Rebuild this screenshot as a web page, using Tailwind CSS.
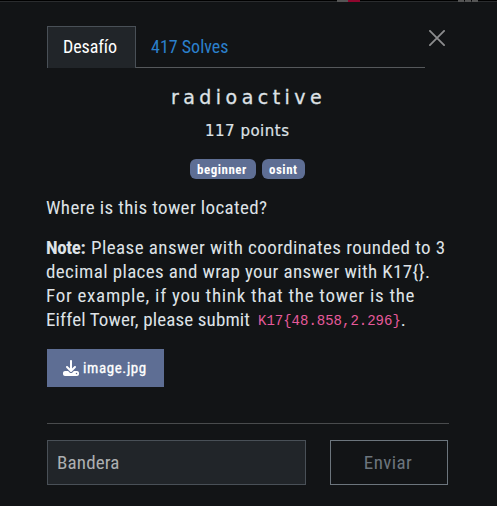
<!DOCTYPE html>
<html lang="es">
<head>
<meta charset="utf-8">
<title>radioactive</title>
<script src="https://cdn.jsdelivr.net/npm/@tailwindcss/browser@4"></script>
</head>
<body class="h-[506px] w-[497px] overflow-hidden bg-[#121416] font-['Roboto_Condensed','Roboto',sans-serif] text-[19px] text-[#dee2e6] whitespace-nowrap">
<div class="flex h-0.5 border-b border-[#2a2c2e] bg-black">
  <div class="ml-[337px] h-0.5 w-[11px] bg-[#555]"></div><div class="h-0.5 w-3 bg-[#90062e]"></div>
  <div class="ml-[98px] flex gap-px"><i class="h-0.5 w-1.5 bg-[#555]"></i><i class="h-0.5 w-1.5 bg-[#555]"></i><i class="h-0.5 w-1.5 bg-[#555]"></i></div>
</div>
<button class="absolute left-[429px] top-[30px] h-4 w-4" aria-label="Cerrar">
  <svg class="block" width="16" height="16" viewBox="0 0 16 16" fill="none" stroke="#8c8d8e" stroke-width="1.8" stroke-linecap="round"><path d="M.9.9l14.2 14.2M15.1.9L.9 15.1"/></svg>
</button>
<nav class="ml-[47px] mt-6 flex h-[42px] w-[378px] text-[18px]">
  <div class="w-[89px] border border-b-0 border-[#495057] bg-[#212529] pl-[15px] leading-[40px] tracking-[-0.08px] text-white">Desafío</div>
  <div class="flex-1 border-b border-[#55585b] pl-[15px] leading-[42px] tracking-[0px] text-[#2b80cc]">417 Solves</div>
</nav>
<main class="ml-[45px] w-[404px]">
  <h2 class="pl-[126px] pt-[15px] font-['DejaVu_Sans',sans-serif] text-[19px] leading-[28px] tracking-[4.45px] [-webkit-text-stroke:0.3px]">radioactive</h2>
  <h3 class="pl-[160px] pt-[6px] font-['DejaVu_Sans',sans-serif] text-[15px] leading-[28px] tracking-[0.5px] [-webkit-text-stroke:0.2px]">117 points</h3>
  <div class="mt-3.5 flex gap-1.5 pl-[145px] text-[13px] font-bold leading-[21px] tracking-[0.5px] text-white">
    <span class="h-5 w-[66px] rounded-[6px] bg-[#5e6e94] pl-[7px]">beginner</span>
    <span class="h-5 w-[43px] rounded-[6px] bg-[#5e6e94] pl-[7px]">osint</span>
  </div>
  <p class="mt-[17px] pl-px leading-6 tracking-[0.37px]">Where is this tower located?</p>
  <div class="mt-4 pl-px leading-6">
    <p class="flex"><b class="w-[45px] tracking-[-0.4px]">Note:</b><span class="tracking-[0.42px]">Please answer with coordinates rounded to 3</span></p>
    <p class="tracking-[0.38px]">decimal places and wrap your answer with K17{}.</p>
    <p class="tracking-[0.7px]">For example, if you think that the tower is the</p>
    <p class="flex h-6 tracking-[0.13px]"><span class="w-[212px]">Eiffel Tower, please submit</span><code class="font-['Liberation_Mono',monospace] text-[14px] leading-[27px] tracking-normal text-[#e65a9b]">K17{48.858,2.296}</code>.</p>
  </div>
  <a class="ml-0.5 mt-[17px] flex h-[38px] w-[117px] items-center bg-[#5e6e94] pl-4 text-[15px] tracking-[0.6px] text-white">
    <svg class="mr-1" width="16" height="16" viewBox="0 0 512 512" fill="currentColor"><path d="M288 32c0-18-14-32-32-32s-32 14-32 32v243l-73-74c-13-12-33-12-46 0s-12 33 0 46l128 128c13 12 33 12 46 0l128-128c12-13 12-33 0-46s-33-12-46 0l-73 74V32zM64 352c-35 0-64 29-64 64v32c0 35 29 64 64 64h384c35 0 64-29 64-64v-32c0-35-29-64-64-64H347l-46 45c-25 25-65 25-90 0l-46-45H64zm368 56a24 24 0 1 1 0 48 24 24 0 1 1 0-48z"/></svg>
    <span class="[-webkit-text-stroke:0.3px]">image.jpg</span>
  </a>
  <div class="ml-0.5 mt-9 h-px w-[402px] bg-[#494b4d]"></div>
  <div class="ml-0.5 mt-4 flex gap-6 leading-[44px]">
    <div class="h-[45px] w-[259px] border border-[#495057] bg-[#212529] pl-[9px] tracking-[0.15px] text-[#adafb1]">Bandera</div>
    <button class="h-[45px] w-[118px] border border-[#6c757d] pr-0.5 text-center tracking-[0.38px] text-[#6c757d]">Enviar</button>
  </div>
</main>
</body>
</html>
